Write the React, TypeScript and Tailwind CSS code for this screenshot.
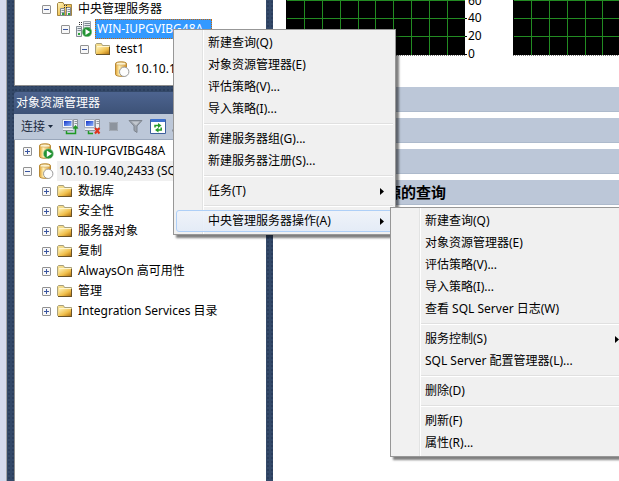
import type { ReactNode } from "react";

type IconName = "group" | "server" | "folder" | "db" | "dbRunning";

interface TreeNode {
  label: string;
  icon: IconName;
  level: number;
  state?: "open" | "closed";
  tone?: "selected" | "inactive";
}

interface MenuEntry {
  label: string;
  submenu?: boolean;
  active?: boolean;
}

const REGISTERED: TreeNode[] = [
  { label: "中央管理服务器", icon: "group", level: 1, state: "open" },
  { label: "WIN-IUPGVIBG48A", icon: "server", level: 2, state: "open", tone: "selected" },
  { label: "test1", icon: "folder", level: 3, state: "open" },
  { label: "10.10.19.40", icon: "db", level: 4 },
];

const EXPLORER: TreeNode[] = [
  { label: "WIN-IUPGVIBG48A", icon: "dbRunning", level: 0, state: "closed" },
  { label: "10.10.19.40,2433 (SQL", icon: "db", level: 0, state: "open", tone: "inactive" },
  { label: "数据库", icon: "folder", level: 1, state: "closed" },
  { label: "安全性", icon: "folder", level: 1, state: "closed" },
  { label: "服务器对象", icon: "folder", level: 1, state: "closed" },
  { label: "复制", icon: "folder", level: 1, state: "closed" },
  { label: "AlwaysOn 高可用性", icon: "folder", level: 1, state: "closed" },
  { label: "管理", icon: "folder", level: 1, state: "closed" },
  { label: "Integration Services 目录", icon: "folder", level: 1, state: "closed" },
];

const SERVER_MENU: MenuEntry[][] = [
  [
    { label: "新建查询(Q)" },
    { label: "对象资源管理器(E)" },
    { label: "评估策略(V)..." },
    { label: "导入策略(I)..." },
  ],
  [{ label: "新建服务器组(G)..." }, { label: "新建服务器注册(S)..." }],
  [{ label: "任务(T)", submenu: true }],
  [{ label: "中央管理服务器操作(A)", submenu: true, active: true }],
];

const ACTIONS_MENU: MenuEntry[][] = [
  [
    { label: "新建查询(Q)" },
    { label: "对象资源管理器(E)" },
    { label: "评估策略(V)..." },
    { label: "导入策略(I)..." },
    { label: "查看 SQL Server 日志(W)" },
  ],
  [{ label: "服务控制(S)", submenu: true }, { label: "SQL Server 配置管理器(L)..." }],
  [{ label: "删除(D)" }],
  [{ label: "刷新(F)" }, { label: "属性(R)..." }],
];

const INDENT = ["pl-2", "pl-[27px]", "pl-[46px]", "pl-[65px]", "pl-[99px]"];

function Gradients() {
  return (
    <svg width="0" height="0" className="absolute" aria-hidden="true">
      <defs>
        <linearGradient id="gold" x1="0" y1="0" x2="1" y2="1">
          <stop offset="0.1" stopColor="#fdeeb0" />
          <stop offset="0.6" stopColor="#f0bf4c" />
          <stop offset="1" stopColor="#b07010" />
        </linearGradient>
        <linearGradient id="cylinder" x1="0" y1="0" x2="1" y2="0">
          <stop offset="0" stopColor="#e0a030" />
          <stop offset="0.35" stopColor="#fff0b4" />
          <stop offset="1" stopColor="#d48e22" />
        </linearGradient>
        <linearGradient id="screen" x1="0" y1="0" x2="1" y2="1">
          <stop offset="0" stopColor="#1233c4" />
          <stop offset="1" stopColor="#8fb6ff" />
        </linearGradient>
      </defs>
    </svg>
  );
}

function Folder() {
  return (
    <>
      <path d="M0.5 12.5V3.5L1.5 2.5H6.5L7.5 4.5H14.5V12.5Z" fill="#f4dc8c" stroke="#a8a07c" />
      <path d="M2 5.5H14.5V13H1Z" fill="url(#gold)" />
      <path d="M2 5.5H14" stroke="#fff6d0" />
      <path d="M1 13.5H15M14.5 6V13" stroke="#6b5428" />
    </>
  );
}

function Cylinder() {
  return (
    <>
      <path
        d="M1.5 2.5C1.5 0.3 12.5 0.3 12.5 2.5V13.5C12.5 15.9 1.5 15.9 1.5 13.5Z"
        fill="url(#cylinder)"
        stroke="#b98a36"
      />
      <ellipse cx="7" cy="2.7" rx="5" ry="1.5" fill="#fdf3cf" stroke="#c79a48" strokeWidth="0.6" />
    </>
  );
}

function NodeIcon({ name }: { name: IconName }) {
  let art: ReactNode;
  if (name === "folder") {
    art = <Folder />;
  } else if (name === "group") {
    art = (
      <>
        <path d="M0.5 14.5V2.5L1.5 1.5H6L7 3.5H14.5V14.5Z" fill="url(#gold)" stroke="#a28542" />
        <path d="M3.5 7.5H7.5V14.5H3.5ZM9.5 6.5H13.5V14.5H9.5Z" fill="#eef1f4" stroke="#7f858c" />
        <path d="M4.5 9.5H7M4.5 11.5H7M10.5 8.5H13M10.5 10.5H13" stroke="#8a929b" />
        <path d="M5 12h2v2H5zM11 12h2v2h-2z" fill="#2fa53a" />
        <path d="M7 4.5h1M9 4.5h1M7 6.5h1M9 6.5h1" stroke="#333" />
      </>
    );
  } else if (name === "server") {
    art = (
      <>
        <path d="M3 1.5h1M5 1.5h1M3 3.5h1M5 3.5h1" stroke="#333" />
        <path d="M7.5 0.5H14.5V12.5H7.5Z" fill="#e9edf0" stroke="#9aa1a8" />
        <path d="M8.5 2.5H14M8.5 4.5H14M8.5 6.5H14" stroke="#7d8790" />
        <path d="M0.5 5.5H5.5V15.5H0.5Z" fill="#e9edf0" stroke="#858d94" />
        <path d="M1.5 7.5H5M1.5 9.5H5" stroke="#7d8790" />
        <path d="M2 12h2v2H2z" fill="#2fa53a" />
        <circle cx="11" cy="11" r="4.8" fill="#239334" stroke="#8dc795" strokeWidth="0.6" />
        <path d="M9.5 8V14L14.2 11Z" fill="#fff" />
      </>
    );
  } else {
    art = (
      <>
        <Cylinder />
        {name === "dbRunning" ? (
          <>
            <circle cx="10.4" cy="10.8" r="5" fill="#239334" stroke="#a7d3ab" strokeWidth="0.6" />
            <path d="M8.8 7.6V14L13.9 10.8Z" fill="#fff" />
          </>
        ) : (
          <circle cx="10.2" cy="10.8" r="4.7" fill="#fdfdfd" stroke="#9b9b9b" />
        )}
      </>
    );
  }
  return (
    <svg width="16" height="16" viewBox="0 0 16 16" className="shrink-0" aria-hidden="true">
      {art}
    </svg>
  );
}

function Expander({ state }: { state: "open" | "closed" }) {
  return (
    <svg width="9" height="9" viewBox="0 0 9 9" className="mr-[6px] shrink-0" aria-hidden="true">
      <rect x="0.5" y="0.5" width="8" height="8" rx="0.5" fill="#f7f7f7" stroke="#919191" />
      <path d={state === "open" ? "M2 4.5H7" : "M2 4.5H7M4.5 2V7"} stroke="#3a55a0" />
    </svg>
  );
}

function Tree({ nodes, label }: { nodes: TreeNode[]; label: string }) {
  return (
    <ul aria-label={label}>
      {nodes.map((node) => (
        <li key={node.label} className={`flex h-5 items-center ${INDENT[node.level]}`}>
          {node.state ? <Expander state={node.state} /> : null}
          <NodeIcon name={node.icon} />
          <button
            type="button"
            className={
              node.tone === "selected"
                ? "ml-[3px] h-5 border border-dotted border-[#cc6600] bg-[#3399ff] pr-2 pl-px leading-4 whitespace-nowrap text-white"
                : node.tone === "inactive"
                  ? "ml-[3px] h-5 bg-[#f0f0f0] px-[2px] leading-5 whitespace-nowrap"
                  : "ml-[3px] h-5 px-[2px] leading-5 whitespace-nowrap"
            }
          >
            {node.label}
          </button>
        </li>
      ))}
    </ul>
  );
}

function ComputerArt() {
  return (
    <>
      <path d="M11.5 1.5H15.5V10.5H11.5Z" fill="#eef0f2" stroke="#8e959e" />
      <path d="M12.5 3.5H15M12.5 5.5H15" stroke="#9299a1" />
      <path d="M0.5 1.5H10.5V9.5H0.5Z" fill="#f4f6fa" stroke="#a5adba" />
      <path d="M2 3H9.5V8H2Z" fill="url(#screen)" />
      <path d="M1 11.5H11" stroke="#eef0f2" strokeWidth="2" />
      <path d="M1 12.5H11" stroke="#8e959e" />
    </>
  );
}

function ToolButton({ label, children }: { label: string; children: ReactNode }) {
  return (
    <button type="button" aria-label={label} className="shrink-0">
      <svg width="17" height="17" viewBox="0 0 17 17">
        {children}
      </svg>
    </button>
  );
}

function Toolbar() {
  return (
    <div className="flex h-[26px] items-center gap-[5px] overflow-hidden border-b border-[#9aa7bb] bg-[#bcc7d8] pl-[7px]">
      <button type="button" className="flex shrink-0 items-center gap-[3px] pr-1 text-[#1b293e]">
        连接
        <svg width="5" height="3" viewBox="0 0 5 3" aria-hidden="true">
          <path d="M0 0H5L2.5 3Z" fill="#1b293e" />
        </svg>
      </button>
      <ToolButton label="连接对象资源管理器">
        <ComputerArt />
        <path d="M4.5 13V15.5H13.5V9" stroke="#1e9a22" strokeWidth="1.5" fill="none" />
        <path d="M10.5 10.5L13.5 7L16.5 10.5Z" fill="#1e9a22" />
      </ToolButton>
      <ToolButton label="断开连接">
        <ComputerArt />
        <path d="M4.5 13V15.5H9" stroke="#1e9a22" strokeWidth="1.5" fill="none" />
        <path d="M11 10L15.5 15.5M15.5 10L11 15.5" stroke="#e0321c" strokeWidth="2" />
      </ToolButton>
      <ToolButton label="停止">
        <path d="M3 4H12V13H3Z" fill="#8d949e" />
        <path d="M3.5 4.5H11.5V12.5H3.5Z" fill="none" stroke="#a3aab5" />
      </ToolButton>
      <ToolButton label="筛选器">
        <path d="M1 2.5H14L9 8V14.5L6 12.5V8Z" fill="#9ba1aa" stroke="#7f8690" />
        <path d="M3.5 3.5H11.5L8 7.5" fill="#c2c7ce" />
      </ToolButton>
      <ToolButton label="刷新">
        <path d="M0.5 1.5H15.5V15.5H0.5Z" fill="#fff" stroke="#3c5f9c" />
        <path d="M1 1H15V4H1Z" fill="#3d71cf" />
        <path d="M5 9.5V7.5H9" stroke="#239a28" strokeWidth="1.5" fill="none" />
        <path d="M8 5L11.5 7.5L8 10Z" fill="#239a28" />
        <path d="M11.2 9.5V12H8" stroke="#239a28" strokeWidth="1.5" fill="none" />
        <path d="M8.5 9.5L5 12L8.5 14.5Z" fill="#239a28" />
      </ToolButton>
      <ToolButton label="活动监视器">
        <path d="M0 12.5H4L6 5L9 14L11 9H16" stroke="#8d949e" strokeWidth="2" fill="none" />
      </ToolButton>
    </div>
  );
}

function Splitter() {
  return (
    <div className="w-[7px] shrink-0 bg-[#344969] bg-[radial-gradient(#2b3e5d_1px,transparent_1px)] bg-[length:4px_4px]" />
  );
}

function Chart({ axis }: { axis?: boolean }) {
  const columns = [18, 36, 54, 72, 89, 107, 125, 143, 161];
  return (
    <svg width="227" height="64" viewBox="0 0 227 64" className="shrink-0" aria-hidden="true">
      <rect width="179" height="55" fill="#000" />
      {columns.map((x) => (
        <path key={x} d={`M${x + 0.5} 0V55`} stroke="#228b22" />
      ))}
      <path d="M1 0.5H179M1 18.5H179M1 36.5H179" stroke="#228b22" />
      <path d="M0 55.5H179" stroke="#808080" strokeDasharray="1 1" />
      {axis ? (
        <>
          <path d="M179 18.5H181M179 36.5H181M179 54.5H181" stroke="#000" />
          <g fontSize="12" fill="#000">
            <text x="182" y="5">60</text>
            <text x="182" y="22">40</text>
            <text x="182" y="40">20</text>
            <text x="182" y="58">0</text>
          </g>
        </>
      ) : null}
    </svg>
  );
}

function Menu({ groups, label, className }: { groups: MenuEntry[][]; label: string; className: string }) {
  return (
    <div
      role="menu"
      aria-label={label}
      className={`absolute border border-[#979797] bg-[linear-gradient(to_right,#f1f1f1_28px,#e2e3e3_28px,#e2e3e3_29px,#fff_29px,#fff_30px,#f0f0f0_30px)] p-[2px] shadow-[3px_3px_2px_rgba(0,0,0,0.5)] ${className}`}
    >
      {groups.map((group, index) => (
        <div key={group[0].label}>
          {index > 0 ? (
            <div role="separator" className="flex h-2 flex-col justify-center pl-7">
              <div className="h-[2px] border-t border-[#e0e0e0] bg-white" />
            </div>
          ) : null}
          {group.map((entry) => (
            <button
              key={entry.label}
              type="button"
              role="menuitem"
              aria-haspopup={entry.submenu ? "menu" : undefined}
              className={
                entry.active
                  ? "flex h-[22px] w-full items-center justify-between rounded-[3px] border border-[#aecff7] bg-linear-to-b from-[#eff3fa]/90 to-[#e3ebf7]/90 pr-2 pl-[31px] whitespace-nowrap"
                  : "flex h-[22px] w-full items-center justify-between border border-transparent pr-2 pl-[31px] whitespace-nowrap"
              }
            >
              {entry.label}
              {entry.submenu ? (
                <svg width="4" height="7" viewBox="0 0 4 7" aria-hidden="true">
                  <path d="M0 0L4 3.5L0 7Z" fill="#000" />
                </svg>
              ) : null}
            </button>
          ))}
        </div>
      ))}
    </div>
  );
}

export default function App() {
  return (
    <div className="relative flex h-screen overflow-hidden bg-white font-['Noto_Sans','Noto_Sans_CJK_SC',sans-serif] text-xs text-black">
      <Gradients />
      <div className="w-[7px] shrink-0 border-r border-[#a5a5a8] bg-[#d5daee]" />
      <Splitter />

      <aside className="flex w-[252px] shrink-0 flex-col bg-[#344969] bg-[radial-gradient(#2b3e5d_1px,transparent_1px)] bg-[length:4px_4px]">
        <section className="flex h-[86px] flex-col justify-end overflow-hidden border-b border-l border-[#8e8e8e] bg-white pb-[6px]">
          <Tree nodes={REGISTERED} label="已注册的服务器" />
        </section>
        <section className="mt-[6px] flex min-h-0 flex-1 flex-col">
          <h2 className="h-[22px] shrink-0 rounded-t-[3px] bg-linear-to-b from-[#4d6490] to-[#3d5277] pl-[2px] leading-[22px] text-white">
            对象资源管理器
          </h2>
          <Toolbar />
          <div className="flex-1 overflow-hidden border-l border-[#8e8e8e] bg-white pt-px">
            <Tree nodes={EXPLORER} label="对象资源管理器" />
          </div>
        </section>
      </aside>
      <Splitter />

      <main className="min-w-0 flex-1 overflow-hidden">
        <div className="flex overflow-hidden pl-[13px]">
          <Chart axis />
          <Chart />
        </div>
        <div className="mt-[23px] flex flex-col gap-[6px]">
          <div className="h-[25px] border-b border-[#adbacc] bg-[#bcc7d8]" />
          <div className="h-[25px] border-b border-[#adbacc] bg-[#bcc7d8]" />
          <div className="h-[25px] border-b border-[#adbacc] bg-[#bcc7d8]" />
          <h3 className="h-[25px] border-b border-[#adbacc] bg-[#bcc7d8] pl-2 text-[15px] leading-6 font-bold whitespace-nowrap">
            最近耗费大量资源的查询
          </h3>
        </div>
      </main>

      <Menu groups={SERVER_MENU} label="服务器" className="top-[29px] left-[173px] w-[223px]" />
      <Menu groups={ACTIONS_MENU} label="中央管理服务器操作" className="top-[207px] left-[390px] w-[241px]" />
    </div>
  );
}
